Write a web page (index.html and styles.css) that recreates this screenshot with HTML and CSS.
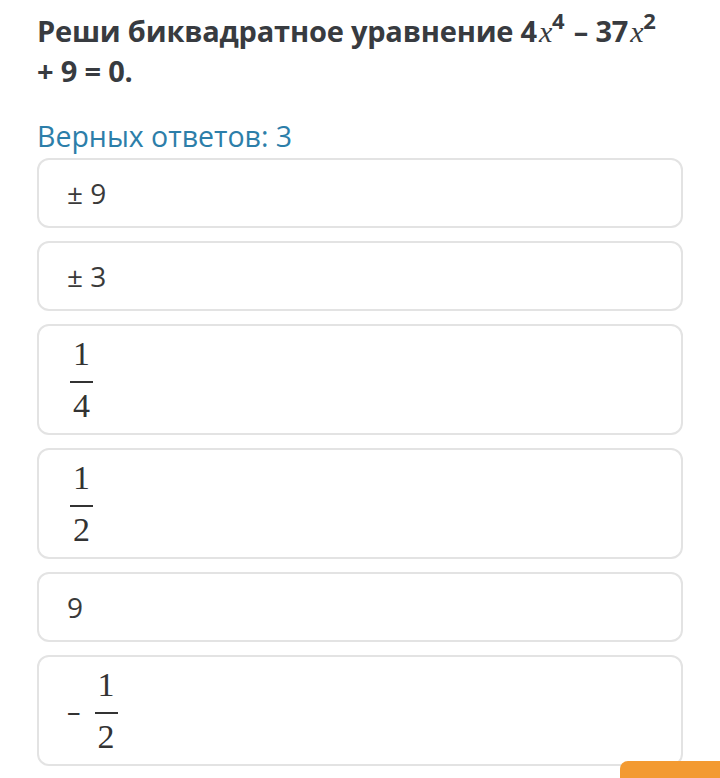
FILE: index.html
```html
<!DOCTYPE html>
<html lang="ru">
<head>
<meta charset="utf-8">
<title>Биквадратное уравнение</title>
<link rel="stylesheet" href="styles.css">
</head>
<body>
<main class="page">
  <h1 class="question">Реши биквадратное уравнение 4<span class="mi">x</span><sup class="sup">4</sup> – 37<span class="mi">x</span><sup class="sup">2</sup> + 9 = 0.</h1>
  <p class="hint">Верных ответов: 3</p>
  <ul class="answers">
    <li class="card"><span class="val">± 9</span></li>
    <li class="card"><span class="val">± 3</span></li>
    <li class="card card-tall">
      <span class="frac"><span class="num">1</span><span class="bar"></span><span class="den">4</span></span>
    </li>
    <li class="card card-tall">
      <span class="frac"><span class="num">1</span><span class="bar"></span><span class="den">2</span></span>
    </li>
    <li class="card"><span class="val">9</span></li>
    <li class="card card-tall">
      <span class="minus">–</span>
      <span class="frac"><span class="num">1</span><span class="bar"></span><span class="den">2</span></span>
    </li>
  </ul>
</main>
<div class="next-btn"></div>
</body>
</html>
```
FILE: styles.css
```css
html, body {
  margin: 0;
  padding: 0;
  background: #ffffff;
}
body {
  font-family: "Open Sans", "Liberation Sans", sans-serif;
  width: 720px;
  height: 778px;
  overflow: hidden;
  position: relative;
}
.page {
  padding: 11px 37px 0 37px;
}
.question {
  margin: 0;
  max-width: 636px;
  height: 80px;
  font-size: 29px;
  line-height: 40px;
  font-weight: 700;
  color: #383b40;
  letter-spacing: -0.2px;
}
.mi {
  font-family: "Liberation Serif", "DejaVu Serif", serif;
  font-style: italic;
  font-weight: 400;
  font-size: 30px;
  line-height: 20px;
  margin-left: 2px;
}
.sup {
  font-size: 22px;
  line-height: 0;
  vertical-align: 13px;
  font-weight: 700;
  margin-right: 2px;
}
.hint {
  margin: 27px 0 4px 0;
  font-size: 28.5px;
  line-height: 36px;
  color: #2c7ea9;
  font-weight: 400;
}
.answers {
  list-style: none;
  margin: 0;
  padding: 0;
  display: flex;
  flex-direction: column;
  gap: 13px;
}
.card {
  box-sizing: border-box;
  height: 70px;
  border: 2px solid #e3e3e3;
  border-radius: 12px;
  padding: 0 28px;
  display: flex;
  align-items: center;
  color: #3a3a3a;
}
.card-tall {
  height: 111px;
}
.val {
  font-size: 28px;
  line-height: 34px;
}
.frac {
  display: inline-flex;
  flex-direction: column;
  align-items: center;
  font-family: "Liberation Serif", "DejaVu Serif", serif;
  font-size: 34px;
  line-height: 32px;
  margin-left: 3px;
  color: #333333;
}
.bar {
  width: 23px;
  height: 2px;
  background: #333333;
  margin: 11px 0 7px 0;
}
.minus {
  font-size: 27px;
  line-height: 34px;
  color: #333333;
  margin-right: 11px;
}
.next-btn {
  position: absolute;
  left: 620px;
  top: 761px;
  width: 120px;
  height: 40px;
  background: #f39a31;
  border-radius: 8px 0 0 0;
}
```
